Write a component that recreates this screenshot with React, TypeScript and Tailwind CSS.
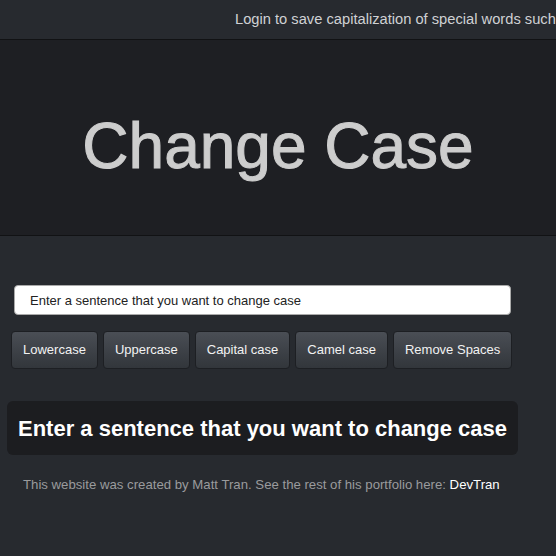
import React, { useState } from 'react';

const buttons = ['Lowercase', 'Uppercase', 'Capital case', 'Camel case', 'Remove Spaces'];

const App: React.FC = () => {
  const [text, setText] = useState('Enter a sentence that you want to change case');

  return (
    <div className="min-h-[556px] bg-[#272a2f] font-['Liberation_Sans',Arial,sans-serif] overflow-hidden">
      <div className="h-10 flex items-center pl-[235px] whitespace-nowrap text-[14.7px] text-[#cfd1d4] border-b border-[#111214] overflow-hidden">
        Login to save capitalization of special words such as names or brands.
      </div>
      <div className="h-[196px] bg-[#1e1f23] border-b border-[#111214] flex items-center justify-center">
        <h1 className="text-[64px] leading-none text-[#cdcdcd] pt-[16px] [-webkit-text-stroke:1px_#cdcdcd]">Change Case</h1>
      </div>

      <div className="pt-[49px] pl-[14px]">
        <input
          value={text}
          onChange={(e) => setText(e.target.value)}
          className="w-[497px] h-[30px] bg-white rounded-[4px] border border-[#aaa] px-[15px] text-[13px] text-[#222] outline-none"
        />
      </div>

      <div className="flex gap-[5px] pl-[11px] pt-[16px]">
        {buttons.map((b) => (
          <button
            key={b}
            className="h-[38px] px-[11px] rounded-[4px] border border-[#1d1f23] bg-gradient-to-b from-[#4a4e55] to-[#32363b] text-[13px] text-[#f2f2f2]"
          >
            {b}
          </button>
        ))}
      </div>

      <div className="mx-[7px] w-[511px] mt-[32px] h-[54px] rounded-[6px] bg-[#1c1d20] flex items-center pl-[11px]">
        <span className="text-[22px] font-bold text-white whitespace-nowrap">{text}</span>
      </div>

      <p className="pl-[23px] pt-[20px] text-[13.2px] text-[#9a9b9d] whitespace-nowrap">
        This website was created by Matt Tran. See the rest of his portfolio here:{' '}
        <a className="text-white">DevTran</a>
      </p>
    </div>
  );
};

export default App;
